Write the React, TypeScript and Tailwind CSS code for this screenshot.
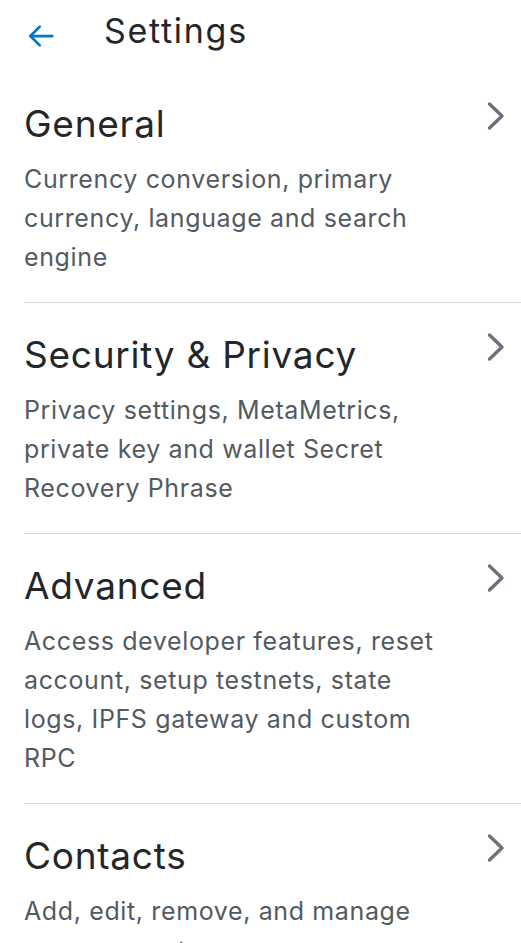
const sections = [
  {
    title: 'General',
    description: 'Currency conversion, primary currency, language and search engine',
  },
  {
    title: 'Security & Privacy',
    description: 'Privacy settings, MetaMetrics, private key and wallet Secret Recovery Phrase',
  },
  {
    title: 'Advanced',
    description: 'Access developer features, reset account, setup testnets, state logs, IPFS gateway and custom RPC',
  },
  {
    title: 'Contacts',
    description: 'Add, edit, remove, and manage your accounts',
  },
];

export default function App() {
  return (
    <div className="w-[521px] h-[943px] overflow-hidden bg-white font-['Inter',sans-serif]">
      <div className="h-[72px] flex items-center">
        <button className="w-[80px] pl-[26px] flex items-center text-[#0376c9]">
          <svg width="30" height="30" viewBox="0 0 24 24" fill="none" stroke="currentColor" strokeWidth="2.2" strokeLinecap="round" strokeLinejoin="round">
            <path d="M21 12H3.5" />
            <path d="M11 4.5L3.5 12l7.5 7.5" />
          </svg>
        </button>
        <h1 className="ml-[24px] -mt-[10px] text-[34px] leading-none tracking-[0.05em] text-[#24272a]">Settings</h1>
      </div>
      <div>
        {sections.map((s) => (
          <div key={s.title} className="ml-6 border-b border-[#d6d9dc] pt-7 pb-[25px] pr-[15px]">
            <div className="flex items-start justify-between">
              <h2 className="text-[37px] leading-[48px] tracking-[0.02em] text-[#24272a]">{s.title}</h2>
              <svg className="mt-[1px] text-[#6a737d]" width="20" height="30" viewBox="0 0 20 30" fill="none" stroke="currentColor" strokeWidth="3.4" strokeLinecap="round" strokeLinejoin="round">
                <path d="M3.5 3L16 15 3.5 27" />
              </svg>
            </div>
            <p className="mt-3 max-w-[430px] text-[25px] leading-[39px] tracking-[0.025em] text-[#535a61]">{s.description}</p>
          </div>
        ))}
      </div>
    </div>
  );
}
